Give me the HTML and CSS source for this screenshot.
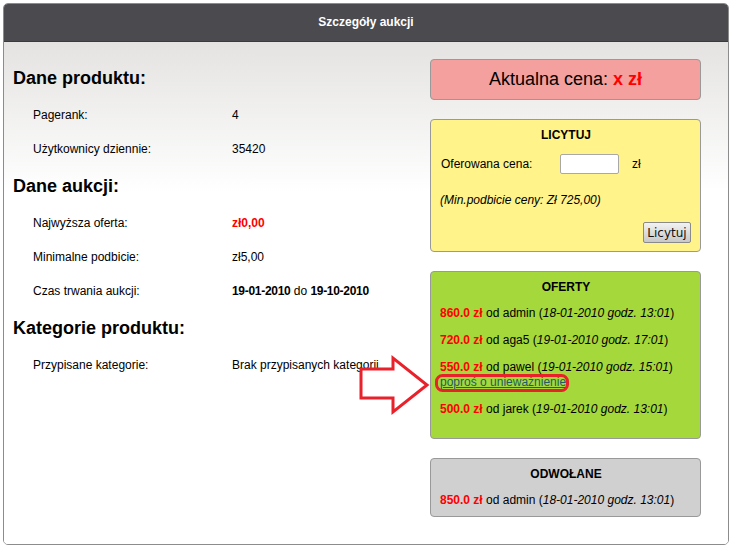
FILE: index.html
```html
<!DOCTYPE html>
<html lang="pl">
<head>
<meta charset="utf-8">
<title>Szczegóły aukcji</title>
<link rel="stylesheet" href="styles.css">
</head>
<body>
<div class="panel">
  <div class="panel-head">Szczegóły aukcji</div>
  <div class="panel-body">
    <div class="left">
      <h2 class="sec">Dane produktu:</h2>
      <div class="row"><span class="lbl">Pagerank:</span><span>4</span></div>
      <div class="row"><span class="lbl">Użytkownicy dziennie:</span><span>35420</span></div>
      <h2 class="sec">Dane aukcji:</h2>
      <div class="row"><span class="lbl">Najwyższa oferta:</span><span class="red b">zł0,00</span></div>
      <div class="row"><span class="lbl">Minimalne podbicie:</span><span>zł5,00</span></div>
      <div class="row"><span class="lbl">Czas trwania aukcji:</span><span><b class="date">19-01-2010</b> do <b class="date">19-10-2010</b></span></div>
      <h2 class="sec">Kategorie produktu:</h2>
      <div class="row"><span class="lbl">Przypisane kategorie:</span><span>Brak przypisanych kategorii</span></div>
    </div>
    <div class="right">
      <div class="box price">Aktualna cena: <span class="red b">x zł</span></div>
      <div class="box bid">
        <div class="title">LICYTUJ</div>
        <div class="bid-row"><span class="bid-lbl">Oferowana cena:</span><input class="inp" type="text"><span>zł</span></div>
        <div class="bid-min">(Min.podbicie ceny: Zł 725,00)</div>
        <div class="bid-btn"><button class="btn">Licytuj</button></div>
      </div>
      <div class="box offers">
        <div class="title">OFERTY</div>
        <div class="offer"><span class="red b">860.0 zł</span> od admin (<i>18-01-2010 godz. 13:01</i>)</div>
        <div class="offer"><span class="red b">720.0 zł</span> od aga5 (<i>19-01-2010 godz. 17:01</i>)</div>
        <div class="offer"><span class="red b">550.0 zł</span> od pawel (<i>19-01-2010 godz. 15:01</i>)<br><a class="link" href="#">poproś o unieważnienie</a></div>
        <div class="offer"><span class="red b">500.0 zł</span> od jarek (<i>19-01-2010 godz. 13:01</i>)</div>
      </div>
      <div class="box cancelled">
        <div class="title">ODWOŁANE</div>
        <div class="offer"><span class="red b">850.0 zł</span> od admin (<i>18-01-2010 godz. 13:01</i>)</div>
      </div>
    </div>
  </div>
</div>
<svg class="annot" width="732" height="547" viewBox="0 0 732 547">
  <polygon points="361,369 393,369 393,358 427,385 393,412 393,398 361,398" fill="none" stroke="#e8212b" stroke-width="3" stroke-linejoin="miter"/>
  <rect x="436.5" y="375.5" width="131" height="15" rx="6" fill="none" stroke="#e8212b" stroke-width="3"/>
</svg>
</body>
</html>
```
FILE: styles.css
```css
html, body {
  margin: 0;
  padding: 0;
  background: #fff;
}
body {
  font-family: "Liberation Sans", Arial, sans-serif;
  font-size: 12px;
  color: #000;
  position: relative;
  width: 732px;
  height: 547px;
  overflow: hidden;
}
.panel {
  margin: 3px 0 0 3px;
  width: 724px;
  height: 540px;
  border: 1px solid #8c8c8c;
  border-radius: 5px;
  overflow: hidden;
  display: flex;
  flex-direction: column;
}
.panel-head {
  height: 37px;
  background: #4a4a4f;
  color: #fff;
  font-weight: bold;
  font-size: 12px;
  line-height: 37px;
  text-align: center;
  border-bottom: 1px solid #3a3a3e;
}
.panel-body {
  flex: 1;
  display: flex;
  background: linear-gradient(#e4e3e1 0, #ffffff 150px);
}
.left {
  width: 417px;
  padding: 16px 0 0 9px;
}
.sec {
  margin: 8px 0;
  font-size: 18px;
  line-height: 24px;
  font-weight: bold;
}
.row {
  display: flex;
  height: 34px;
  line-height: 34px;
  padding-left: 20px;
}
.lbl {
  width: 199px;
}
.date {
  letter-spacing: -0.3px;
}
.red { color: #ff0000; }
.b { font-weight: bold; }
.right {
  width: 271px;
  padding-top: 17px;
  display: flex;
  flex-direction: column;
  gap: 19px;
}
.box {
  border: 1px solid #999;
  border-radius: 4px;
  box-sizing: border-box;
}
.price {
  height: 41px;
  background: #f4a09f;
  font-size: 18px;
  line-height: 39px;
  text-align: center;
}
.title {
  font-weight: bold;
  text-align: center;
  line-height: 14px;
  margin-top: 8px;
}
.bid {
  height: 133px;
  background: #fff38a;
  padding: 0 9px 0 10px;
}
.bid-row {
  display: flex;
  align-items: center;
  height: 22px;
  margin-top: 11px;
}
.bid-lbl {
  width: 119px;
}
.inp {
  width: 59px;
  height: 20px;
  box-sizing: border-box;
  border: 1px solid #a8a8a8;
  border-radius: 2px;
  background: #fff;
  margin: 0 13px 0 0;
  padding: 0;
}
.bid-min {
  font-style: italic;
  line-height: 14px;
  margin-top: 18px;
  margin-left: -1px;
}
.bid-btn {
  display: flex;
  justify-content: flex-end;
  margin-top: 15px;
}
.btn {
  width: 48px;
  height: 21px;
  padding: 0;
  font-family: "DejaVu Sans", "Liberation Sans", sans-serif;
  font-size: 12px;
  color: #111;
  background: linear-gradient(#f2f2f2, #c8c8c8);
  border: 1px solid #8a8a8a;
  border-radius: 2px;
}
.offers {
  height: 168px;
  background: #a5d83a;
  padding: 0 8px 0 9px;
}
.cancelled {
  height: 59px;
  background: #d0d0d0;
  padding: 0 8px 0 9px;
}
.offer {
  line-height: 15px;
  margin-top: 12px;
}
.link {
  color: #1f5a66;
  text-decoration: underline;
}
.annot {
  position: absolute;
  left: 0;
  top: 0;
  pointer-events: none;
}
```
